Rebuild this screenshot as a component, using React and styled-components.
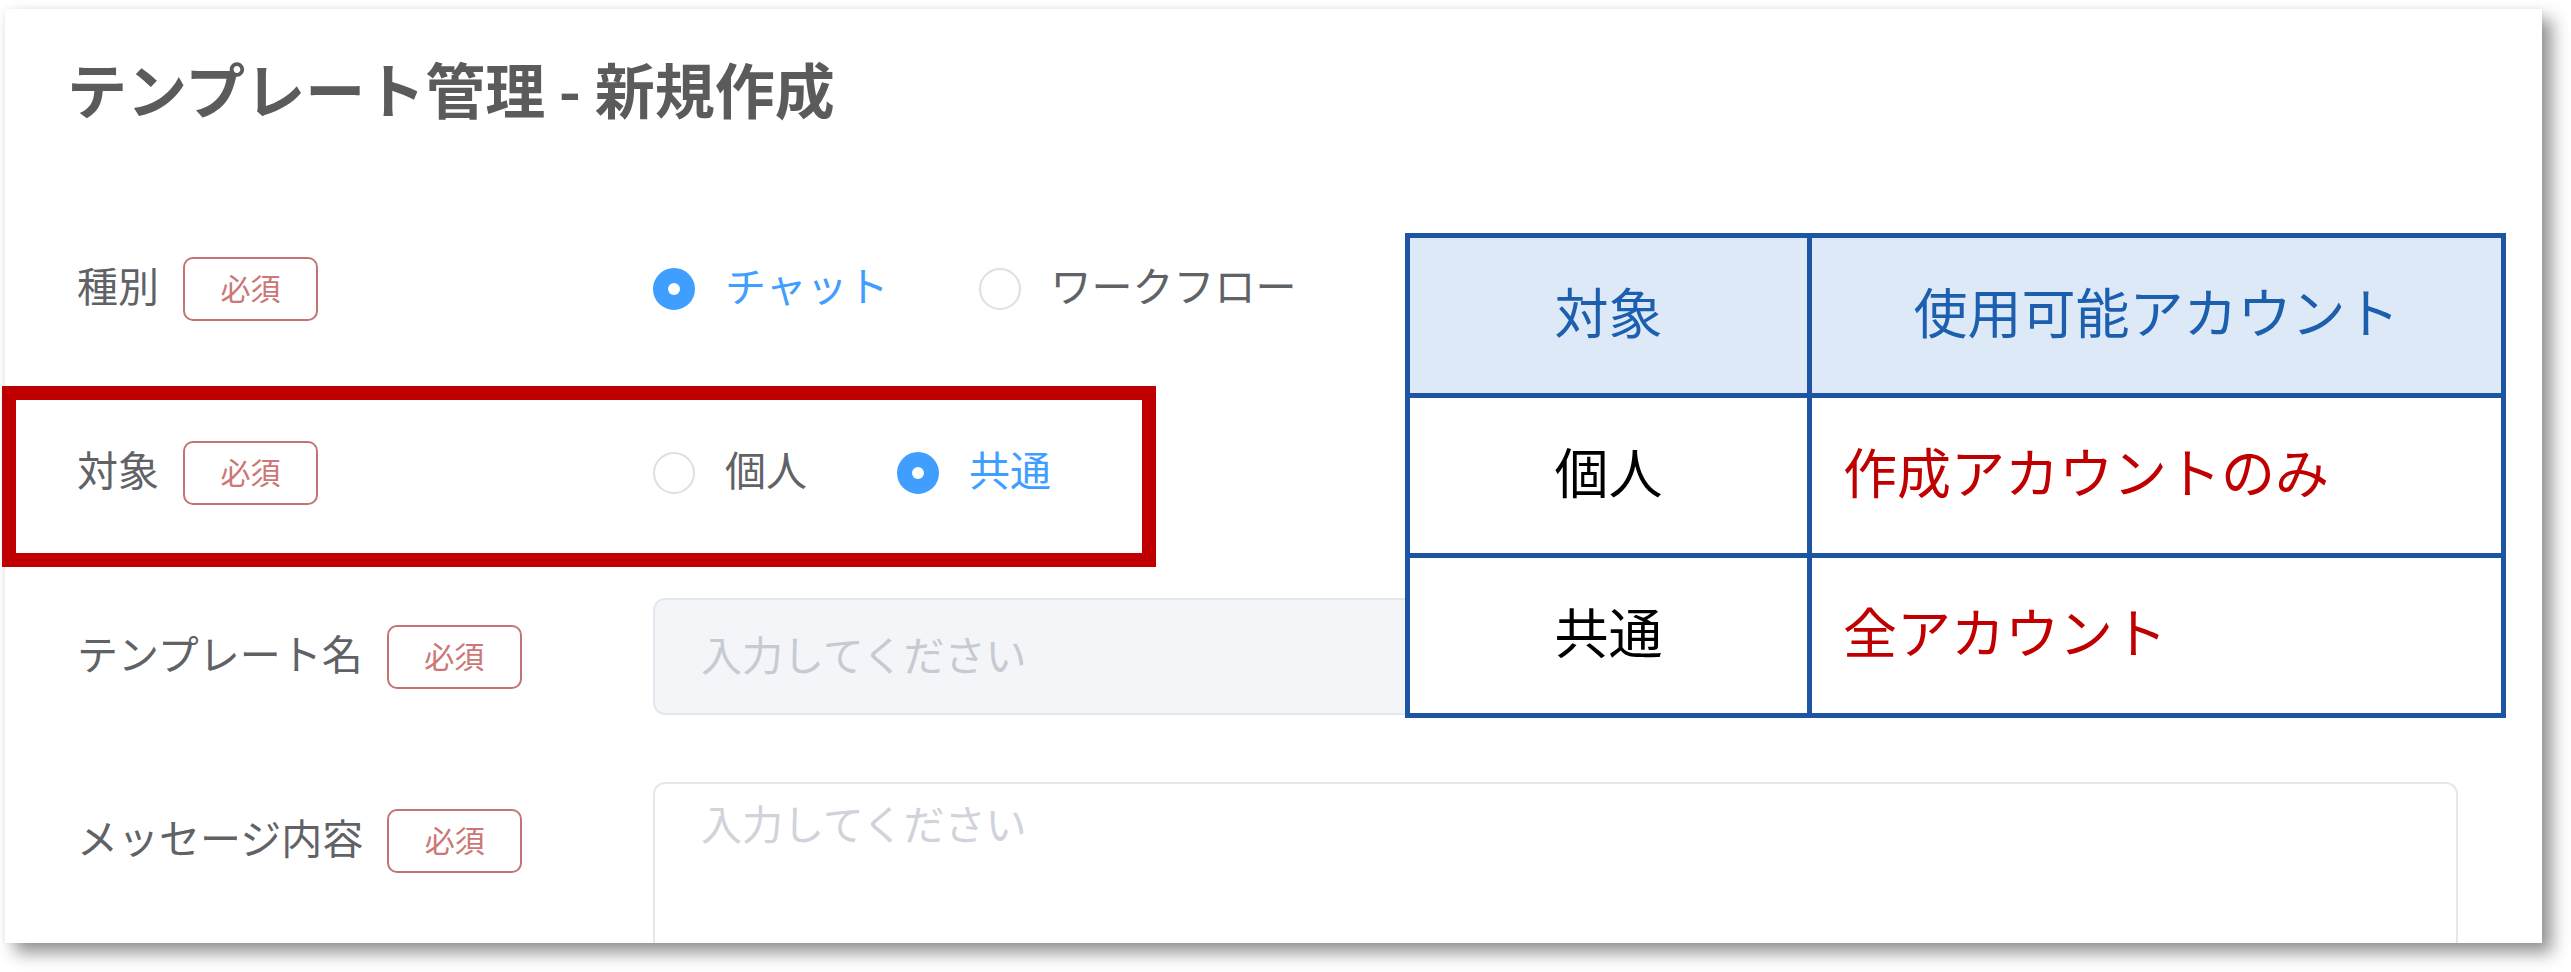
import styled, { createGlobalStyle } from "styled-components";

const GlobalStyle = createGlobalStyle`
    body {
        margin: 0;
        background: #ffffff;
        font-family: "Noto Sans CJK JP", "Noto Sans", sans-serif;
    }
`

const Stage = styled.div`
    position: relative;
    width: 2571px;
    height: 972px;
    overflow: hidden;
    background: #ffffff;
`

const Card = styled.div`
    margin: 9px 0 0 5px;
    width: 2537px;
    height: 934px;
    box-sizing: border-box;
    padding: 43px 0 0 62px;
    overflow: hidden;
    background: #ffffff;
    box-shadow: 10px 10px 16px rgba(0, 0, 0, 0.42), 0 0 6px rgba(0, 0, 0, 0.06);
`

const Titulo = styled.h1`
    margin: 0 0 106px;
    font-size: 60px;
    line-height: 72px;
    font-weight: 700;
    color: #5b5b5b;
`

const Form = styled.div`
    display: flex;
    flex-direction: column;
    gap: 67px;
    padding-left: 10px;
`

const FormItem = styled.div`
    display: flex;
    align-items: flex-start;
`

const LabelCell = styled.div`
    width: 576px;
    height: 117px;
    flex-shrink: 0;
    display: flex;
    align-items: center;
`

const LabelText = styled.span`
    font-size: 41px;
    line-height: 1;
    padding-bottom: 9px;
    color: #606266;
`

const Badge = styled.span`
    margin-left: 24px;
    width: 135px;
    height: 64px;
    box-sizing: border-box;
    border: 2px solid #c27474;
    border-radius: 10px;
    display: flex;
    align-items: center;
    justify-content: center;
    padding-bottom: 4px;
    font-size: 30px;
    color: #cc7676;
`

const Content = styled.div`
    width: 1805px;
`

const RadioGroup = styled.div`
    height: 117px;
    display: flex;
    align-items: center;
`

const RadioItem = styled.label`
    display: flex;
    align-items: center;
    margin-right: 90px;
    font-size: 41px;
    line-height: 1;
    color: ${(p) => (p.checked ? "#409eff" : "#606266")};
`

const RadioDot = styled.span`
    width: 42px;
    height: 42px;
    box-sizing: border-box;
    border-radius: 50%;
    border: 2px solid ${(p) => (p.checked ? "#409eff" : "#dcdfe6")};
    background: ${(p) => (p.checked ? "#409eff" : "#ffffff")};
    display: flex;
    align-items: center;
    justify-content: center;

    &::after {
        content: "";
        width: 12px;
        height: 12px;
        border-radius: 50%;
        background: #ffffff;
        display: ${(p) => (p.checked ? "block" : "none")};
    }
`

const RadioLabel = styled.span`
    padding: 0 0 9px 30px;
`

const TextInput = styled.input`
    width: 100%;
    height: 117px;
    box-sizing: border-box;
    border: 2px solid #e4e7ed;
    border-radius: 12px;
    background: #f3f5f8;
    padding: 0 46px 8px;
    font-family: "Noto Sans CJK JP", sans-serif;
    font-size: 41px;
    color: #606266;
    outline: none;

    &::placeholder {
        color: #c6cad1;
    }
`

const TextArea = styled.textarea`
    display: block;
    width: 100%;
    height: 320px;
    box-sizing: border-box;
    border: 2px solid #e4e7ed;
    border-radius: 12px;
    background: #ffffff;
    padding: 8px 46px;
    font-family: "Noto Sans CJK JP", sans-serif;
    font-size: 41px;
    line-height: 1.5;
    color: #606266;
    resize: none;
    outline: none;

    &::placeholder {
        color: #d0d3d9;
    }
`

// anotação vermelha sobre a linha "対象"
const RedFrame = styled.div`
    position: absolute;
    left: 2px;
    top: 386px;
    width: 1154px;
    height: 181px;
    box-sizing: border-box;
    border: 14px solid #c00000;
`

const AccountTable = styled.div`
    position: absolute;
    left: 1405px;
    top: 233px;
    width: 1101px;
    box-sizing: border-box;
    display: grid;
    grid-template-columns: 402px 1fr;
    border: 5px solid #1e55a2;
    background: #ffffff;
    font-size: 54px;
    line-height: 1;
`

const Cell = styled.div`
    height: ${(p) => (p.last ? "155px" : "160px")};
    box-sizing: border-box;
    display: flex;
    align-items: center;
    justify-content: ${(p) => (p.left ? "flex-start" : "center")};
    padding: 0 0 10px ${(p) => (p.left ? "31px" : "0")};
    border-right: ${(p) => (p.first ? "5px solid #1e55a2" : "none")};
    border-bottom: ${(p) => (p.last ? "none" : "5px solid #1e55a2")};
    background: ${(p) => (p.head ? "#dde9f6" : "#ffffff")};
    color: ${(p) => p.color};
`

const opcoes = [
    { label: "種別", radios: [["チャット", true], ["ワークフロー", false]] },
    { label: "対象", radios: [["個人", false], ["共通", true]] },
]

function App() {
    return (
        <Stage>
            <GlobalStyle />
            <Card>
                <Titulo>テンプレート管理 - 新規作成</Titulo>
                <Form>
                    {opcoes.map((o) => (
                        <FormItem key={o.label}>
                            <LabelCell>
                                <LabelText>{o.label}</LabelText>
                                <Badge>必須</Badge>
                            </LabelCell>
                            <Content>
                                <RadioGroup>
                                    {o.radios.map(([txt, on]) => (
                                        <RadioItem key={txt} checked={on}>
                                            <RadioDot checked={on} />
                                            <RadioLabel>{txt}</RadioLabel>
                                        </RadioItem>
                                    ))}
                                </RadioGroup>
                            </Content>
                        </FormItem>
                    ))}
                    <FormItem>
                        <LabelCell>
                            <LabelText>テンプレート名</LabelText>
                            <Badge>必須</Badge>
                        </LabelCell>
                        <Content>
                            <TextInput placeholder="入力してください" readOnly />
                        </Content>
                    </FormItem>
                    <FormItem>
                        <LabelCell>
                            <LabelText>メッセージ内容</LabelText>
                            <Badge>必須</Badge>
                        </LabelCell>
                        <Content>
                            <TextArea placeholder="入力してください" readOnly />
                        </Content>
                    </FormItem>
                </Form>
            </Card>
            <RedFrame />
            <AccountTable>
                <Cell head first color="#1c5fae">対象</Cell>
                <Cell head color="#1c5fae">使用可能アカウント</Cell>
                <Cell first color="#000000">個人</Cell>
                <Cell left color="#c00000">作成アカウントのみ</Cell>
                <Cell first last color="#000000">共通</Cell>
                <Cell left last color="#c00000">全アカウント</Cell>
            </AccountTable>
        </Stage>
    );
}

export default App;
